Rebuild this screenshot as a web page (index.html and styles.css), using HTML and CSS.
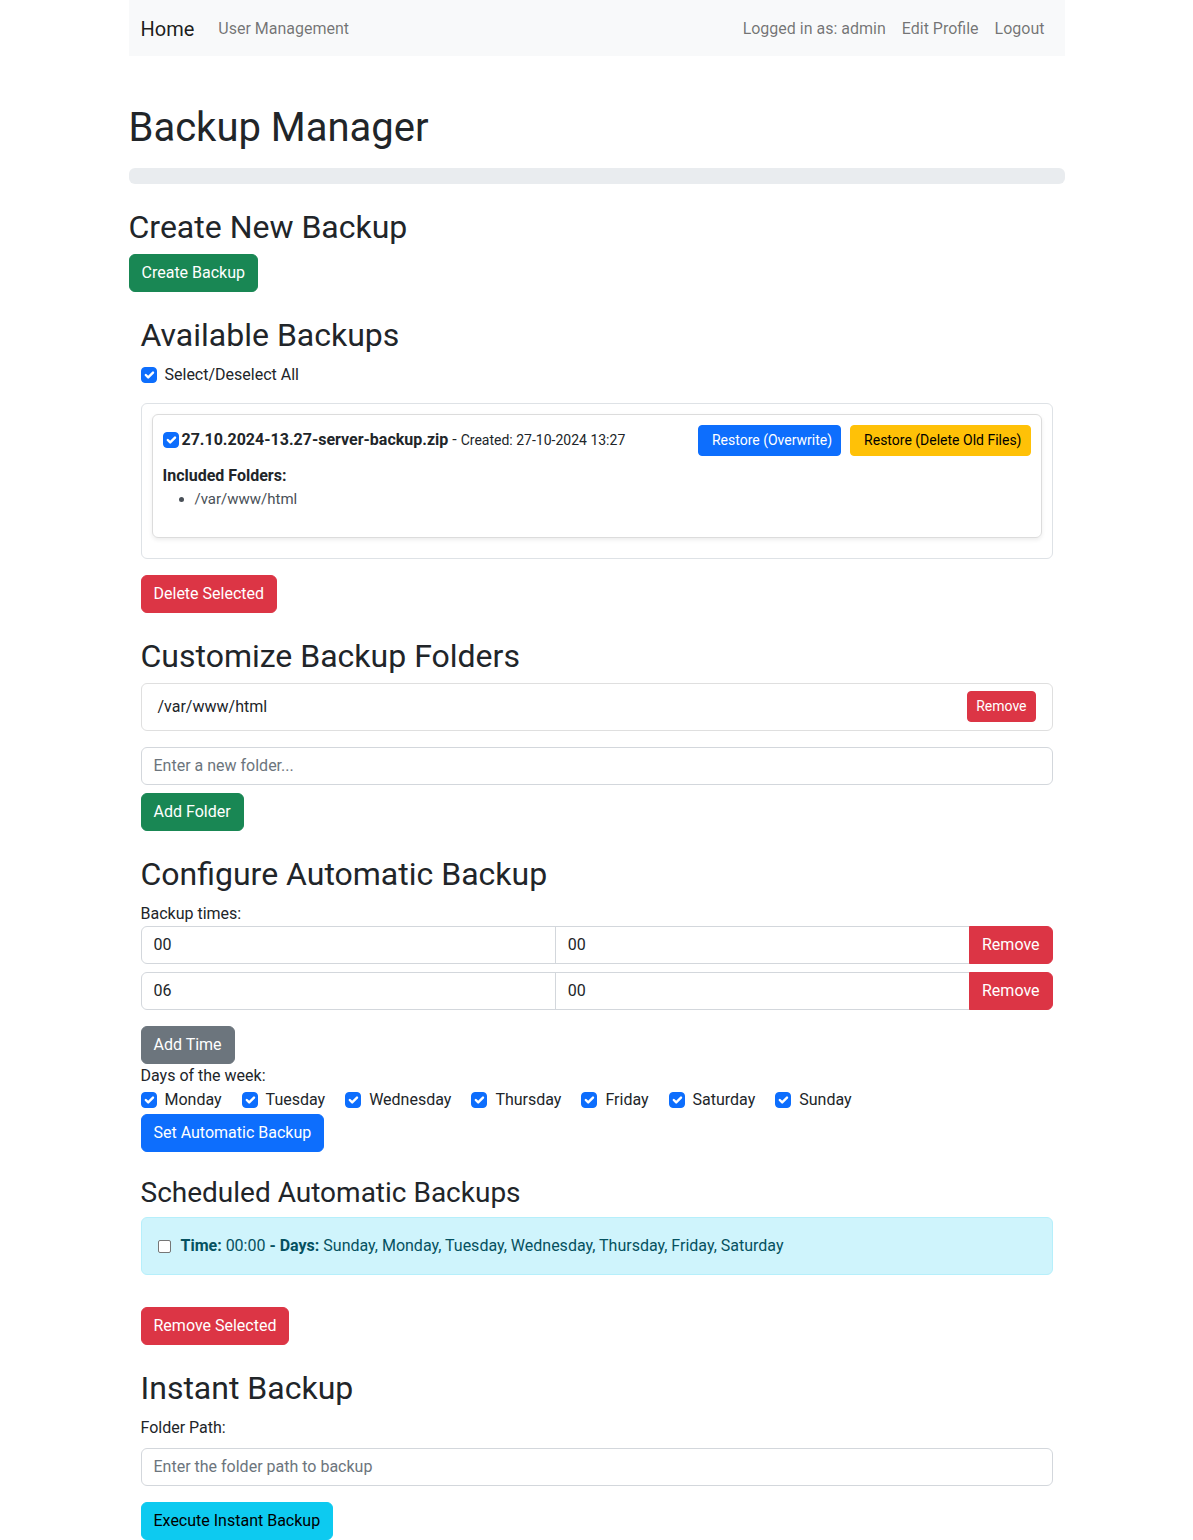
FILE: index.html
```html
<!DOCTYPE html>
<html lang="en">
<head>
<meta charset="utf-8">
<title>Backup Manager</title>
<link rel="stylesheet" href="styles.css">
</head>
<body>
<div class="container">
  <nav class="navbar">
    <a class="brand" href="#">Home</a>
    <ul class="nav">
      <li><a class="nav-link" href="#">User Management</a></li>
    </ul>
    <ul class="nav nav-right">
      <li><span class="nav-link">Logged in as: admin</span></li>
      <li><a class="nav-link" href="#">Edit Profile</a></li>
      <li><a class="nav-link" href="#">Logout</a></li>
    </ul>
  </nav>

  <main class="main">
    <h1 class="h1">Backup Manager</h1>
    <div class="progress"></div>

    <h2 class="h2">Create New Backup</h2>
    <button class="btn btn-success">Create Backup</button>

    <div class="inner">
      <section class="section">
        <h2 class="h2">Available Backups</h2>
        <div class="form-check select-all">
          <span class="check checked"><svg viewBox="0 0 20 20" width="16" height="16"><path d="m6 10 3 3 6-6" fill="none" stroke="#fff" stroke-width="3" stroke-linecap="round" stroke-linejoin="round"/></svg></span>
          <span>Select/Deselect All</span>
        </div>
        <div class="backup-box">
          <div class="backup-card">
            <div class="backup-head">
              <div class="backup-title">
                <span class="check checked"><svg viewBox="0 0 20 20" width="16" height="16"><path d="m6 10 3 3 6-6" fill="none" stroke="#fff" stroke-width="3" stroke-linecap="round" stroke-linejoin="round"/></svg></span>
                <strong>27.10.2024-13.27-server-backup.zip</strong>
                <span class="dash">-</span>
                <small class="created">Created: 27-10-2024 13:27</small>
              </div>
              <div class="backup-actions">
                <button class="btn btn-sm btn-primary btn-restore">Restore (Overwrite)</button>
                <button class="btn btn-sm btn-warning btn-restore">Restore (Delete Old Files)</button>
              </div>
            </div>
            <div class="included">Included Folders:</div>
            <ul class="folder-list">
              <li>/var/www/html</li>
            </ul>
          </div>
        </div>
        <button class="btn btn-danger mt-3">Delete Selected</button>
      </section>

      <section class="section">
        <h2 class="h2">Customize Backup Folders</h2>
        <ul class="list-group">
          <li class="list-item">
            <span>/var/www/html</span>
            <button class="btn btn-sm btn-danger">Remove</button>
          </li>
        </ul>
        <input class="form-control" type="text" placeholder="Enter a new folder...">
        <button class="btn btn-success mt-2">Add Folder</button>
      </section>

      <section class="section">
        <h2 class="h2">Configure Automatic Backup</h2>
        <label class="label">Backup times:</label>
        <div class="input-group">
          <input class="form-control" type="text" value="00">
          <input class="form-control" type="text" value="00">
          <button class="btn btn-danger">Remove</button>
        </div>
        <div class="input-group">
          <input class="form-control" type="text" value="06">
          <input class="form-control" type="text" value="00">
          <button class="btn btn-danger">Remove</button>
        </div>
        <button class="btn btn-secondary mt-2">Add Time</button>
        <label class="label">Days of the week:</label>
        <div class="days">
          <div class="form-check inline"><span class="check checked"><svg viewBox="0 0 20 20" width="16" height="16"><path d="m6 10 3 3 6-6" fill="none" stroke="#fff" stroke-width="3" stroke-linecap="round" stroke-linejoin="round"/></svg></span><span>Monday</span></div>
          <div class="form-check inline"><span class="check checked"><svg viewBox="0 0 20 20" width="16" height="16"><path d="m6 10 3 3 6-6" fill="none" stroke="#fff" stroke-width="3" stroke-linecap="round" stroke-linejoin="round"/></svg></span><span>Tuesday</span></div>
          <div class="form-check inline"><span class="check checked"><svg viewBox="0 0 20 20" width="16" height="16"><path d="m6 10 3 3 6-6" fill="none" stroke="#fff" stroke-width="3" stroke-linecap="round" stroke-linejoin="round"/></svg></span><span>Wednesday</span></div>
          <div class="form-check inline"><span class="check checked"><svg viewBox="0 0 20 20" width="16" height="16"><path d="m6 10 3 3 6-6" fill="none" stroke="#fff" stroke-width="3" stroke-linecap="round" stroke-linejoin="round"/></svg></span><span>Thursday</span></div>
          <div class="form-check inline"><span class="check checked"><svg viewBox="0 0 20 20" width="16" height="16"><path d="m6 10 3 3 6-6" fill="none" stroke="#fff" stroke-width="3" stroke-linecap="round" stroke-linejoin="round"/></svg></span><span>Friday</span></div>
          <div class="form-check inline"><span class="check checked"><svg viewBox="0 0 20 20" width="16" height="16"><path d="m6 10 3 3 6-6" fill="none" stroke="#fff" stroke-width="3" stroke-linecap="round" stroke-linejoin="round"/></svg></span><span>Saturday</span></div>
          <div class="form-check inline"><span class="check checked"><svg viewBox="0 0 20 20" width="16" height="16"><path d="m6 10 3 3 6-6" fill="none" stroke="#fff" stroke-width="3" stroke-linecap="round" stroke-linejoin="round"/></svg></span><span>Sunday</span></div>
        </div>
        <button class="btn btn-primary">Set Automatic Backup</button>
      </section>

      <section class="section">
        <h3 class="h3">Scheduled Automatic Backups</h3>
        <div class="alert">
          <span class="native-check"></span>
          <span><strong>Time:</strong> 00:00 <strong>- Days:</strong> Sunday, Monday, Tuesday, Wednesday, Thursday, Friday, Saturday</span>
        </div>
        <button class="btn btn-danger mt-3">Remove Selected</button>
      </section>

      <section class="section">
        <h2 class="h2">Instant Backup</h2>
        <label class="label mb-2">Folder Path:</label>
        <input class="form-control mb-3" type="text" placeholder="Enter the folder path to backup">
        <button class="btn btn-info">Execute Instant Backup</button>
      </section>
    </div>
  </main>
</div>
</body>
</html>
```

FILE: styles.css
```css
* { box-sizing: border-box; }

html, body {
  margin: 0;
  padding: 0;
}

body {
  font-family: Roboto, "Liberation Sans", sans-serif;
  font-size: 16px;
  line-height: 1.5;
  color: #212529;
  background: #fff;
}

.container {
  width: 960px;
  margin: 0 auto;
  padding: 0 12px;
}

/* navbar */
.navbar {
  display: flex;
  align-items: center;
  background: #f8f9fa;
  padding: 8px 12px;
  height: 56px;
}

.brand {
  font-size: 20px;
  line-height: 30px;
  padding: 6px 0 4px;
  margin-right: 16px;
  color: rgba(0, 0, 0, 0.9);
  text-decoration: none;
}

.nav {
  display: flex;
  list-style: none;
  margin: 0;
  padding: 0;
}

.nav-right {
  margin-left: auto;
}

.nav-link {
  display: block;
  padding: 9px 8px 7px;
  color: rgba(0, 0, 0, 0.55);
  text-decoration: none;
}

/* headings */
.main {
  margin-top: 48px;
}

.h1, .h2, .h3 {
  font-weight: 400;
  line-height: 1.2;
  margin: 0 0 8px;
}

.h1 { font-size: 40px; margin-bottom: 16px; }
.h2 { font-size: 32px; }
.h3 { font-size: 28px; }

.progress {
  height: 16px;
  margin-bottom: 24px;
  background: #e9ecef;
  border-radius: 6px;
}

.inner {
  padding: 0 12px;
}

.section {
  margin-top: 24px;
}

/* buttons */
.btn {
  display: inline-block;
  font-family: inherit;
  font-size: 16px;
  line-height: 1.5;
  padding: 6px 12px;
  border: 1px solid transparent;
  border-radius: 6px;
  color: #fff;
  cursor: pointer;
}

.btn-sm {
  font-size: 14px;
  padding: 4px 8px;
  border-radius: 4px;
}

.btn-restore {
  padding-left: 13px;
}

.btn-success { background: #198754; border-color: #198754; }
.btn-danger { background: #dc3545; border-color: #dc3545; }
.btn-primary { background: #0d6efd; border-color: #0d6efd; }
.btn-secondary { background: #6c757d; border-color: #6c757d; }
.btn-warning { background: #ffc107; border-color: #ffc107; color: #000; }
.btn-info { background: #0dcaf0; border-color: #0dcaf0; color: #000; }

.mt-2 { margin-top: 8px; }
.mt-3 { margin-top: 16px; }
.mb-2 { margin-bottom: 8px; }
.mb-3 { margin-bottom: 16px; }

/* checkboxes */
.form-check {
  display: flex;
  align-items: center;
  min-height: 24px;
}

.check {
  display: inline-flex;
  width: 16px;
  height: 16px;
  border-radius: 4px;
  border: 1px solid #dee2e6;
  background: #fff;
  flex: none;
  overflow: hidden;
}

.check.checked {
  background: #0d6efd;
  border-color: #0d6efd;
}

.check svg {
  display: block;
  margin: -1px;
}

.form-check .check {
  margin-right: 8px;
}

.select-all {
  margin-bottom: 16px;
}

/* available backups */
.backup-box {
  border: 1px solid #dee2e6;
  border-radius: 6px;
  padding: 10px;
}

.backup-card {
  border: 1px solid #dcdcdc;
  border-radius: 6px;
  padding: 10px;
  margin-bottom: 10px;
  box-shadow: 0 2px 4px rgba(0, 0, 0, 0.075);
}

.backup-head {
  display: flex;
  align-items: center;
  justify-content: space-between;
}

.backup-title {
  display: flex;
  align-items: center;
}

.backup-title .check {
  margin-right: 3px;
}

.dash {
  margin: 0 4px;
}

.created {
  font-size: 14px;
}

.backup-actions {
  display: flex;
  gap: 9px;
}

.included {
  font-weight: 700;
  margin-top: 8px;
}

.folder-list {
  margin: 0 0 16px;
  padding-left: 32px;
  font-size: 15px;
  line-height: 23px;
  color: #495057;
}

/* list group */
.list-group {
  list-style: none;
  margin: 0 0 16px;
  padding: 0;
}

.list-item {
  display: flex;
  align-items: center;
  justify-content: space-between;
  padding: 7px 16px 8px;
  border: 1px solid #dfdfdf;
  border-radius: 6px;
}

/* inputs */
.form-control {
  display: block;
  width: 100%;
  font-family: inherit;
  font-size: 16px;
  line-height: 1.5;
  padding: 6px 12px;
  color: #212529;
  background: #fff;
  border: 1px solid #d3d7dc;
  border-radius: 6px;
  outline: none;
}

.form-control::placeholder {
  color: #6c757d;
}

.label {
  display: block;
}

.input-group {
  display: flex;
  margin-bottom: 8px;
}

.input-group .form-control {
  flex: 1 1 0;
  min-width: 0;
  border-radius: 0;
}

.input-group .form-control:first-child {
  border-radius: 6px 0 0 6px;
}

.input-group .form-control + .form-control {
  margin-left: -1px;
}

.input-group .btn {
  border-radius: 0 6px 6px 0;
  margin-left: -1px;
}

.days {
  display: flex;
  margin-bottom: 2px;
}

.form-check.inline {
  margin-right: 20px;
}

/* alert */
.alert {
  display: flex;
  align-items: center;
  padding: 16px;
  background: #cff4fc;
  border: 1px solid #b6effb;
  border-radius: 6px;
  color: #055160;
  margin-bottom: 16px;
}

.native-check {
  width: 13px;
  height: 13px;
  border: 1px solid #767676;
  border-radius: 2px;
  background: #fff;
  margin-right: 10px;
  flex: none;
}
```
